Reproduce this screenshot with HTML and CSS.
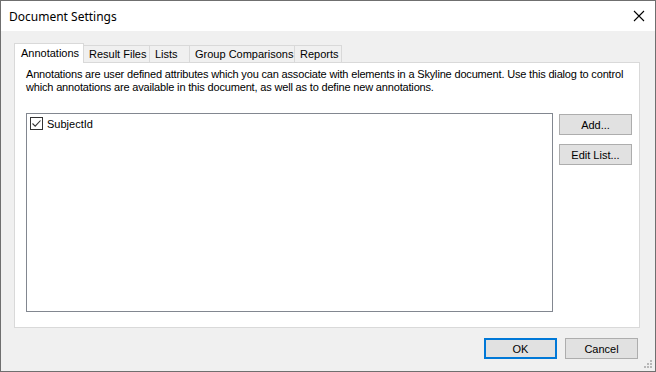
FILE: index.html
```html
<!DOCTYPE html>
<html lang="en">
<head>
  <meta charset="UTF-8" />
  <title>Document Settings</title>
  <link rel="stylesheet" href="styles.css">
</head>
<body>
  <div class="window">
    <div class="titlebar">
      <span class="title">Document Settings</span>
      <svg class="close" width="12" height="12" viewBox="0 0 12 12">
        <path d="M1 1 L11 11 M11 1 L1 11" stroke="#000" stroke-width="1.1" fill="none"/>
      </svg>
    </div>
    <div class="content">
      <div class="tabs">
        <div class="tab active">Annotations</div>
        <div class="tab t-files">Result Files</div>
        <div class="tab t-lists">Lists</div>
        <div class="tab t-groups">Group Comparisons</div>
        <div class="tab t-reports">Reports</div>
      </div>
      <div class="panel">
        <p class="desc">Annotations are user defined attributes which you can associate with elements in a Skyline document. Use this dialog to control which annotations are available in this document, as well as to define new annotations.</p>
        <div class="panel-row">
          <div class="listbox">
            <div class="item">
              <span class="check">
                <svg width="11" height="11" viewBox="0 0 11 11">
                  <path d="M1.5 5.5 L4.2 8.2 L9.5 2.5" stroke="#333" stroke-width="1.1" fill="none"/>
                </svg>
              </span>
              <span>SubjectId</span>
            </div>
          </div>
          <div class="side-buttons">
            <button class="btn">Add...</button>
            <button class="btn">Edit List...</button>
          </div>
        </div>
      </div>
      <div class="footer">
        <button class="btn default">OK</button>
        <button class="btn">Cancel</button>
      </div>
      <svg class="grip" width="10" height="10" viewBox="0 0 10 10">
        <rect x="7" y="1" width="2" height="2" fill="#b8b8b8"/>
        <rect x="4" y="4" width="2" height="2" fill="#b8b8b8"/>
        <rect x="7" y="4" width="2" height="2" fill="#b8b8b8"/>
        <rect x="1" y="7" width="2" height="2" fill="#b8b8b8"/>
        <rect x="4" y="7" width="2" height="2" fill="#b8b8b8"/>
        <rect x="7" y="7" width="2" height="2" fill="#b8b8b8"/>
      </svg>
    </div>
  </div>
</body>
</html>
```

FILE: styles.css
```css
html, body {
  margin: 0;
  padding: 0;
}
body {
  font-family: 'Liberation Sans', Arial, sans-serif;
  font-size: 11px;
  color: #000;
  background: #fff;
}
.window {
  width: 656px;
  height: 372px;
  box-sizing: border-box;
  border: 1px solid #6f6f6f;
  display: flex;
  flex-direction: column;
}
.titlebar {
  height: 30px;
  background: #fff;
  display: flex;
  align-items: center;
  justify-content: space-between;
  padding: 0 10px 0 8px;
}
.title {
  font-family: 'Noto Sans', sans-serif;
  font-size: 12px;
  color: #000;
}
.close {
  display: block;
}
.content {
  flex: 1;
  background: #f0f0f0;
  padding: 12px 0 0 13px;
  position: relative;
}
.tabs {
  display: flex;
  align-items: flex-end;
  height: 19px;
}
.tab {
  box-sizing: border-box;
  height: 17px;
  border: 1px solid #d9d9d9;
  border-bottom: none;
  border-left: none;
  background: #f0f0f0;
  padding: 1px 0 0 5px;
  line-height: 15px;
  white-space: nowrap;
}
.tab.active {
  height: 20px;
  width: 70px;
  background: #fff;
  border-left: 1px solid #d9d9d9;
  padding: 2px 0 0 6px;
  margin-bottom: -1px;
  position: relative;
  z-index: 1;
}
.t-files { width: 66px; }
.t-lists { width: 40px; }
.t-groups { width: 105px; }
.t-reports { width: 47px; }
.panel {
  width: 626px;
  height: 266px;
  box-sizing: border-box;
  background: #fff;
  border: 1px solid #d9d9d9;
  padding: 5px 0 0 11px;
}
.desc {
  margin: 0;
  width: 608px;
  line-height: 13px;
  letter-spacing: -0.17px;
}
.panel-row {
  display: flex;
  margin-top: 19px;
}
.listbox {
  width: 527px;
  height: 199px;
  box-sizing: border-box;
  border: 1px solid #828790;
  background: #fff;
  padding: 3px 3px;
}
.item {
  display: flex;
  align-items: center;
  gap: 4px;
  height: 13px;
}
.check {
  width: 13px;
  height: 13px;
  box-sizing: border-box;
  border: 1px solid #333;
  display: flex;
  align-items: center;
  justify-content: center;
  background: #fff;
}
.check svg {
  display: block;
}
.side-buttons {
  display: flex;
  flex-direction: column;
  gap: 9px;
  margin-left: 6px;
  margin-top: 1px;
}
.btn {
  width: 73px;
  height: 21px;
  box-sizing: border-box;
  background: #e1e1e1;
  border: 1px solid #adadad;
  font-family: 'Liberation Sans', Arial, sans-serif;
  font-size: 11px;
  color: #000;
  padding: 0;
  margin: 0;
}
.btn.default {
  border: 2px solid #0078d7;
}
.footer {
  display: flex;
  justify-content: flex-end;
  gap: 8px;
  margin-top: 10px;
  padding-right: 17px;
}
.grip {
  position: absolute;
  right: 2px;
  bottom: 2px;
}
```
